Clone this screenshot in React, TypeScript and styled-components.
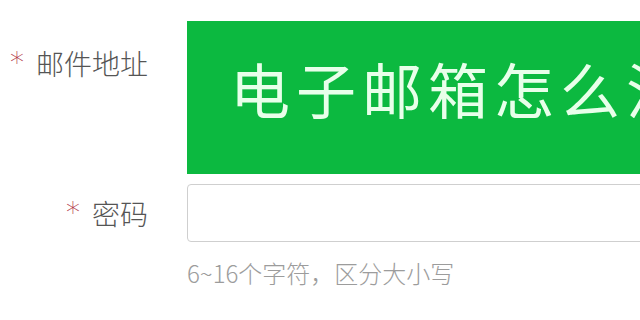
import React from "react";
import styled, { createGlobalStyle } from "styled-components";

const GlobalStyle = createGlobalStyle`
  html, body {
    margin: 0;
    padding: 0;
    background: #ffffff;
    overflow: hidden;
  }
  body {
    font-family: "Noto Sans CJK SC", "Noto Sans", sans-serif;
  }
`;

const Page = styled.div`
  width: 640px;
  height: 320px;
  overflow: hidden;
  padding-top: 21px;
  box-sizing: border-box;
`;

const Form = styled.div`
  display: grid;
  grid-template-columns: 148px 600px;
  column-gap: 39px;
  row-gap: 10px;
`;

const Label = styled.div<{ $top: number }>`
  display: flex;
  justify-content: flex-end;
  align-items: flex-start;
  gap: 12px;
  padding-top: ${(p) => p.$top}px;
  font-size: 28px;
  line-height: 34px;
  font-weight: 300;
  color: #555555;
  white-space: nowrap;
`;

const Star = styled.span`
  color: #b23a48;
  font-family: "DejaVu Sans", sans-serif;
  font-size: 28px;
  line-height: 1;
  margin-top: 3px;
`;

const Banner = styled.div`
  height: 153px;
  background: #0cb940;
  display: flex;
  align-items: center;
  padding-left: 43px;
  padding-bottom: 20px;
  box-sizing: border-box;
  color: #e8ffea;
  font-size: 60px;
  font-weight: 400;
  line-height: 1;
  letter-spacing: 6px;
  white-space: nowrap;
`;

const Input = styled.div`
  height: 58px;
  border: 1px solid #cfcfcf;
  border-radius: 4px;
  box-sizing: border-box;
  background: #fff;
`;

const Hint = styled.div`
  grid-column: 2;
  margin-top: 6px;
  font-size: 24px;
  line-height: 30px;
  font-weight: 300;
  color: #9c9c9c;
  white-space: nowrap;
`;

export default function App() {
  return (
    <>
      <GlobalStyle />
      <Page>
        <Form>
          <Label $top={25}>
            <Star>*</Star>
            <span>邮件地址</span>
          </Label>
          <Banner>电子邮箱怎么注册</Banner>

          <Label $top={12}>
            <Star>*</Star>
            <span>密码</span>
          </Label>
          <Input />

          <Hint>6~16个字符，区分大小写</Hint>
        </Form>
      </Page>
    </>
  );
}
